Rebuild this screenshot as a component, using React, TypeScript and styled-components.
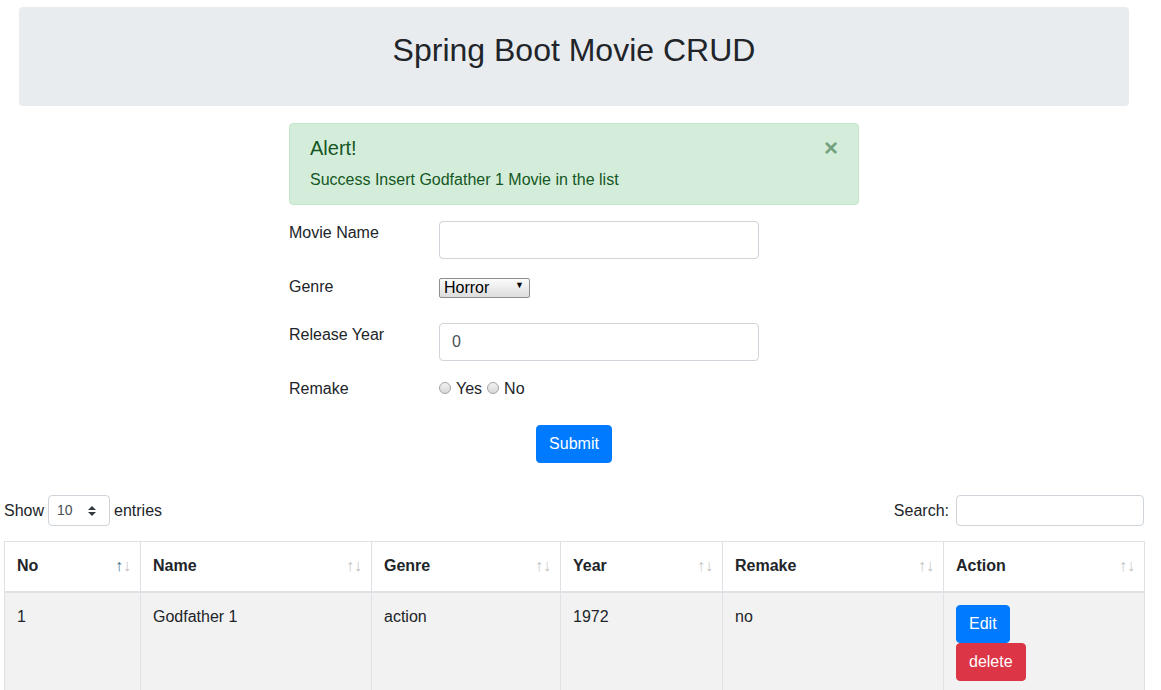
import React from "react";
import styled, { createGlobalStyle } from "styled-components";

const Global = createGlobalStyle`
  html, body { margin: 0; padding: 0; background: #fff; }
  body {
    font-family: "Liberation Sans", Arial, Helvetica, sans-serif;
    font-size: 16px;
    line-height: 1.5;
    color: #212529;
    overflow: hidden;
  }
  * { box-sizing: border-box; }
`;

const Page = styled.div`
  width: 1141px;
  margin-left: 4px;
  padding-top: 7px;
`;

const Jumbotron = styled.header`
  margin: 0 15px;
  width: 1110px;
  height: 99px;
  padding-top: 24px;
  background: #e9ecef;
  border-radius: 4px;
  text-align: center;
`;

const Title = styled.h2`
  margin: 0;
  font-size: 32px;
  font-weight: 500;
  line-height: 1.2;
`;

const FormColumn = styled.div`
  width: 570px;
  margin: 17px 0 0 285px;
`;

const Alert = styled.div`
  position: relative;
  height: 82px;
  padding: 12px 64px 12px 20px;
  background: #d4edda;
  border: 1px solid #c3e6cb;
  border-radius: 4px;
  color: #155724;
`;

const AlertHeading = styled.h4`
  margin: 0 0 8px;
  font-size: 20px;
  font-weight: 500;
  line-height: 1.2;
`;

const AlertText = styled.p`
  margin: 0;
`;

const Close = styled.button`
  position: absolute;
  top: 0;
  right: 0;
  padding: 12px 20px;
  border: 0;
  background: transparent;
  font-family: "Liberation Sans", Arial, sans-serif;
  font-size: 24px;
  font-weight: 700;
  line-height: 1;
  color: #155724;
  opacity: 0.5;
`;

const Form = styled.form`
  margin-top: 16px;
`;

const FormRow = styled.div<{ $h: number; $mb?: number }>`
  display: grid;
  grid-template-columns: 150px 320px;
  align-items: start;
  height: ${(p) => p.$h}px;
  margin-bottom: ${(p) => (p.$mb ?? 16)}px;
`;

const Label = styled.label`
  line-height: 24px;
`;

const TextInput = styled.input`
  width: 320px;
  height: 38px;
  padding: 6px 12px;
  border: 1px solid #ced4da;
  border-radius: 4px;
  font-family: inherit;
  font-size: 16px;
  color: #495057;
  background: #fff;
  outline: none;
`;

const SelectWrap = styled.div`
  position: relative;
  width: 91px;
  height: 20px;
  margin-top: 1px;
  &::after {
    content: "▼";
    position: absolute;
    right: 6px;
    top: 5px;
    font-size: 9px;
    line-height: 1;
    color: #000;
    pointer-events: none;
  }
`;

const NativeSelect = styled.select`
  appearance: none;
  width: 91px;
  height: 20px;
  padding: 0 0 0 4px;
  border: 1px solid #8e8e8e;
  border-radius: 2px;
  background: linear-gradient(#fcfcfc, #dcdcdc);
  font-family: "Liberation Sans", Arial, sans-serif;
  font-size: 16px;
  line-height: 18px;
  color: #000;
`;

const Radios = styled.div`
  display: flex;
  align-items: center;
  line-height: 24px;
`;

const Radio = styled.input`
  appearance: none;
  width: 12px;
  height: 12px;
  margin: 0 5px 2px 0;
  border: 1px solid #a3a3a3;
  border-radius: 50%;
  background: linear-gradient(#f2f2f2, #d8d8d8);
`;

const RadioText = styled.span`
  margin-right: 5px;
`;

const SubmitRow = styled.div`
  display: flex;
  justify-content: center;
  margin-top: 24px;
`;

const Button = styled.button<{ $variant: "primary" | "danger" }>`
  height: 38px;
  padding: 6px 12px;
  border: 1px solid ${(p) => (p.$variant === "primary" ? "#007bff" : "#dc3545")};
  border-radius: 4px;
  background: ${(p) => (p.$variant === "primary" ? "#007bff" : "#dc3545")};
  color: #fff;
  font-family: inherit;
  font-size: 16px;
  line-height: 24px;
`;

const Controls = styled.div`
  display: flex;
  justify-content: space-between;
  align-items: center;
  width: 1140px;
  margin-top: 32px;
  height: 31px;
`;

const LengthLabel = styled.label`
  display: flex;
  align-items: center;
  gap: 4px;
`;

const SmallSelect = styled.div`
  display: flex;
  align-items: center;
  justify-content: space-between;
  width: 62px;
  height: 31px;
  padding: 0 13px 0 8px;
  border: 1px solid #ced4da;
  border-radius: 4px;
  font-size: 14px;
  color: #495057;
`;

const SearchLabel = styled.label`
  display: flex;
  align-items: center;
  gap: 7px;
`;

const SearchInput = styled.input`
  width: 188px;
  height: 31px;
  border: 1px solid #ced4da;
  border-radius: 4px;
  outline: none;
`;

const Table = styled.table`
  width: 1140px;
  margin-top: 15px;
  border-collapse: collapse;
  table-layout: fixed;
`;

const Th = styled.th`
  position: relative;
  padding: 12px 12px 13px;
  border: 1px solid #dee2e6;
  border-bottom: 2px solid #dee2e6;
  text-align: left;
  font-weight: 700;
  line-height: 24px;
  vertical-align: top;
`;

const Arrows = styled.span`
  position: absolute;
  right: 9px;
  top: 12px;
  font-size: 16px;
  font-weight: 400;
  line-height: 24px;
  color: #000;
`;

const Arrow = styled.span<{ $on?: boolean }>`
  opacity: ${(p) => (p.$on ? 0.85 : 0.25)};
  color: ${(p) => (p.$on ? "#1a5a7a" : "#000")};
`;

const Tr = styled.tr`
  background: #f2f2f2;
`;

const Td = styled.td`
  padding: 12px;
  border: 1px solid #dee2e6;
  vertical-align: top;
  line-height: 24px;
  height: 100px;
`;

const Actions = styled.div`
  display: flex;
  flex-direction: column;
  align-items: flex-start;
`;

const cols = [136, 231, 189, 162, 221, 201];
const heads = ["No", "Name", "Genre", "Year", "Remake", "Action"];

export default function App() {
  return (
    <>
      <Global />
      <Page>
        <Jumbotron>
          <Title>Spring Boot Movie CRUD</Title>
        </Jumbotron>
        <FormColumn>
          <Alert>
            <AlertHeading>Alert!</AlertHeading>
            <AlertText>Success Insert Godfather 1 Movie in the list</AlertText>
            <Close type="button">×</Close>
          </Alert>
          <Form>
            <FormRow $h={38}>
              <Label>Movie Name</Label>
              <TextInput type="text" />
            </FormRow>
            <FormRow $h={32}>
              <Label>Genre</Label>
              <SelectWrap>
                <NativeSelect defaultValue="Horror">
                  <option>Action</option>
                  <option>Horror</option>
                  <option>Comedy</option>
                </NativeSelect>
              </SelectWrap>
            </FormRow>
            <FormRow $h={38}>
              <Label>Release Year</Label>
              <TextInput type="text" defaultValue="0" />
            </FormRow>
            <FormRow $h={24} $mb={0}>
              <Label>Remake</Label>
              <Radios>
                <Radio type="radio" name="remake" />
                <RadioText>Yes</RadioText>
                <Radio type="radio" name="remake" />
                <RadioText>No</RadioText>
              </Radios>
            </FormRow>
            <SubmitRow>
              <Button type="button" $variant="primary">Submit</Button>
            </SubmitRow>
          </Form>
        </FormColumn>
        <Controls>
          <LengthLabel>
            Show
            <SmallSelect>
              <span>10</span>
              <svg width="8" height="10" viewBox="0 0 8 10">
                <path d="M4 0 L8 4 H0 Z M4 10 L0 6 H8 Z" fill="#343a40" />
              </svg>
            </SmallSelect>
            entries
          </LengthLabel>
          <SearchLabel>
            Search:
            <SearchInput type="search" />
          </SearchLabel>
        </Controls>
        <Table>
          <colgroup>
            {cols.map((w, i) => (
              <col key={i} style={{ width: w }} />
            ))}
          </colgroup>
          <thead>
            <tr>
              {heads.map((h, i) => (
                <Th key={h}>
                  {h}
                  <Arrows>
                    <Arrow $on={i === 0}>↑</Arrow>
                    <Arrow>↓</Arrow>
                  </Arrows>
                </Th>
              ))}
            </tr>
          </thead>
          <tbody>
            <Tr>
              <Td>1</Td>
              <Td>Godfather 1</Td>
              <Td>action</Td>
              <Td>1972</Td>
              <Td>no</Td>
              <Td>
                <Actions>
                  <Button type="button" $variant="primary">Edit</Button>
                  <Button type="button" $variant="danger">delete</Button>
                </Actions>
              </Td>
            </Tr>
          </tbody>
        </Table>
      </Page>
    </>
  );
}
